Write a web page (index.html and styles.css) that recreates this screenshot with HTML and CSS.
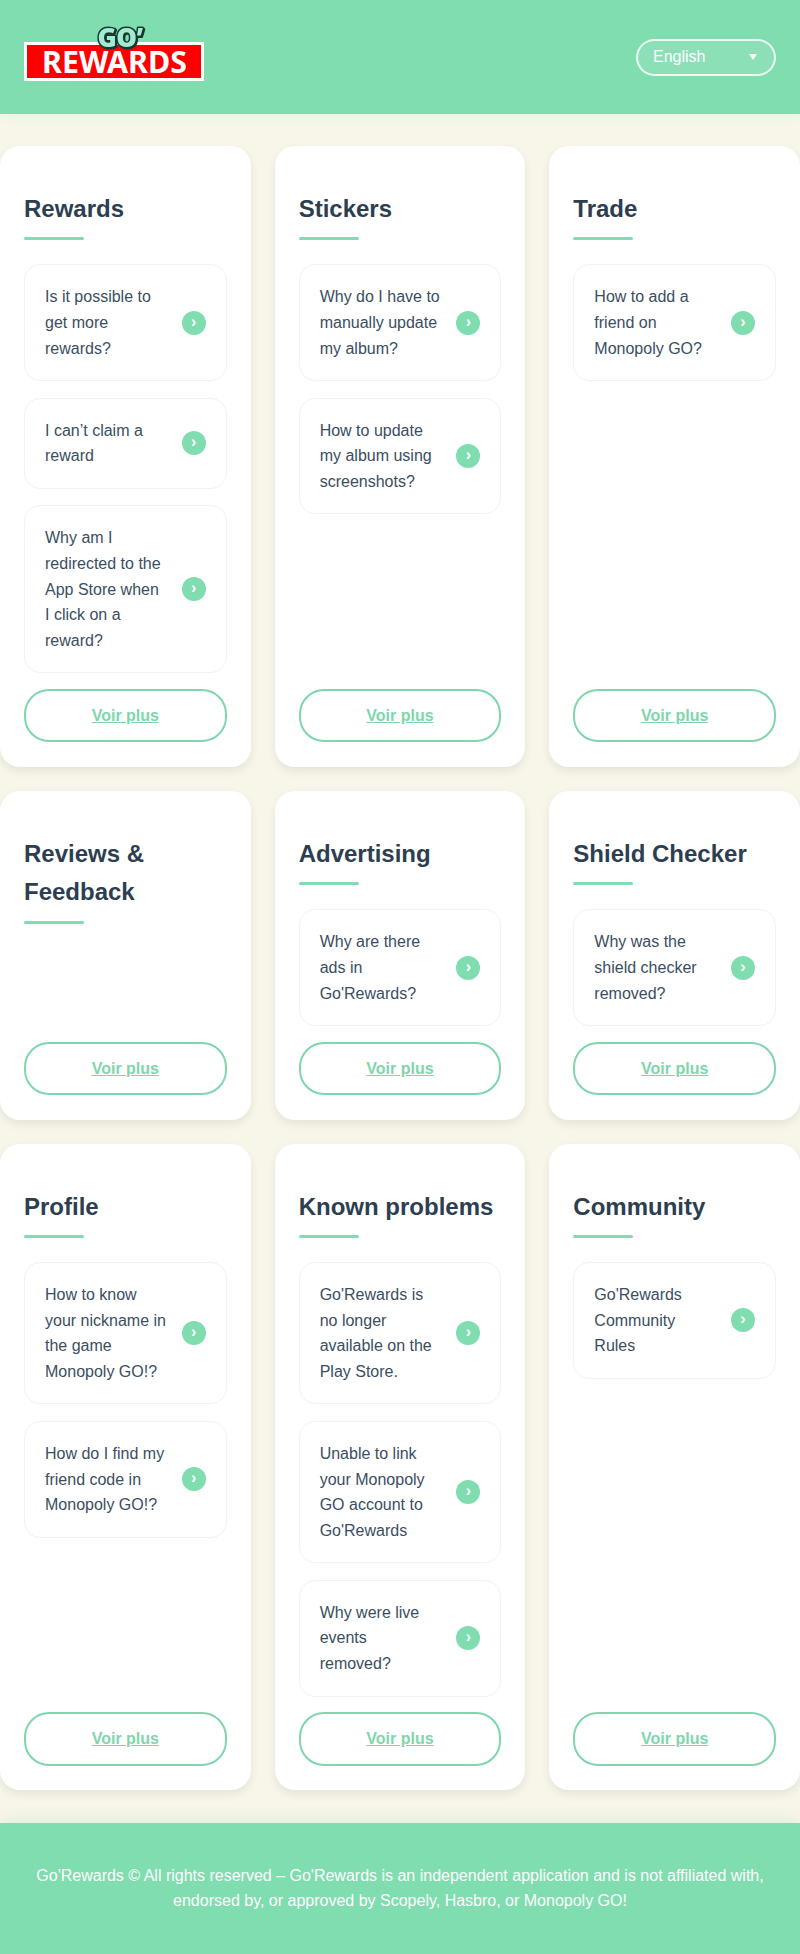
FILE: index.html
```html
<!DOCTYPE html>
<html lang="en">
<head>
<meta charset="utf-8">
<title>Go'Rewards FAQ</title>
<link rel="stylesheet" href="styles.css">
</head>
<body>
<header class="site-header">
  <a class="logo" href="#">
    <svg class="logo-svg" viewBox="0 0 180 62" width="180" height="62" aria-label="Go'Rewards">
      <rect class="logo-box" x="1.5" y="17.5" width="177" height="36"/>
      <text class="logo-rewards" x="90.5" y="47" text-anchor="middle" textLength="145" lengthAdjust="spacingAndGlyphs">REWARDS</text>
      <text class="logo-go" x="73.5" y="20.5">GO’</text>
    </svg>
  </a>
  <div class="lang">
    <span>English</span>
    <span class="lang-arrow"></span>
  </div>
</header>
<main class="grid">
  <section class="card">
    <h2>Rewards</h2>
    <div class="list">
      <a class="item" href="#"><span>Is it possible to get more rewards?</span><i class="chev">›</i></a>
      <a class="item" href="#"><span>I can’t claim a reward</span><i class="chev">›</i></a>
      <a class="item" href="#"><span>Why am I redirected to the App Store when I click on a reward?</span><i class="chev">›</i></a>
    </div>
    <a class="more" href="#">Voir plus</a>
  </section>
  <section class="card">
    <h2>Stickers</h2>
    <div class="list">
      <a class="item" href="#"><span>Why do I have to manually update my album?</span><i class="chev">›</i></a>
      <a class="item" href="#"><span>How to update my album using screenshots?</span><i class="chev">›</i></a>
    </div>
    <a class="more" href="#">Voir plus</a>
  </section>
  <section class="card">
    <h2>Trade</h2>
    <div class="list">
      <a class="item" href="#"><span>How to add a friend on Monopoly GO?</span><i class="chev">›</i></a>
    </div>
    <a class="more" href="#">Voir plus</a>
  </section>
  <section class="card">
    <h2>Reviews &amp; Feedback</h2>
    <div class="list"></div>
    <a class="more" href="#">Voir plus</a>
  </section>
  <section class="card">
    <h2>Advertising</h2>
    <div class="list">
      <a class="item" href="#"><span>Why are there ads in Go'Rewards?</span><i class="chev">›</i></a>
    </div>
    <a class="more" href="#">Voir plus</a>
  </section>
  <section class="card">
    <h2>Shield Checker</h2>
    <div class="list">
      <a class="item" href="#"><span>Why was the shield checker removed?</span><i class="chev">›</i></a>
    </div>
    <a class="more" href="#">Voir plus</a>
  </section>
  <section class="card">
    <h2>Profile</h2>
    <div class="list">
      <a class="item" href="#"><span>How to know your nickname in the game Monopoly GO!?</span><i class="chev">›</i></a>
      <a class="item" href="#"><span>How do I find my friend code in Monopoly GO!?</span><i class="chev">›</i></a>
    </div>
    <a class="more" href="#">Voir plus</a>
  </section>
  <section class="card">
    <h2>Known problems</h2>
    <div class="list">
      <a class="item" href="#"><span>Go'Rewards is no longer available on the Play Store.</span><i class="chev">›</i></a>
      <a class="item" href="#"><span>Unable to link your Monopoly GO account to Go'Rewards</span><i class="chev">›</i></a>
      <a class="item" href="#"><span>Why were live events removed?</span><i class="chev">›</i></a>
    </div>
    <a class="more" href="#">Voir plus</a>
  </section>
  <section class="card">
    <h2>Community</h2>
    <div class="list">
      <a class="item" href="#"><span>Go'Rewards Community Rules</span><i class="chev">›</i></a>
    </div>
    <a class="more" href="#">Voir plus</a>
  </section>
</main>
<footer class="site-footer">
  <p>Go'Rewards © All rights reserved – Go'Rewards is an independent application and is not affiliated with, endorsed by, or approved by Scopely, Hasbro, or Monopoly GO!</p>
</footer>
</body>
</html>
```
FILE: styles.css
```css
* { box-sizing: border-box; }
html, body { margin: 0; padding: 0; }
body {
  font-family: "Liberation Sans", Arial, sans-serif;
  font-size: 16px;
  line-height: 1.6;
  color: #2c3e50;
  background: #f8f6e9;
}
.site-header {
  height: 114px;
  background: #7fddaf;
  display: flex;
  align-items: center;
  justify-content: space-between;
  padding: 0 24px;
  box-shadow: 0 2px 10px rgba(127,221,175,.12);
}
.logo { display: block; }
.logo-svg { display: block; overflow: visible; }
.logo-box { fill: #ff0000; stroke: #fff; stroke-width: 3; }
.logo-rewards { font: 700 30px "Noto Sans", sans-serif; fill: #fff; }
.logo-go {
  font: 800 26px "Open Sans", sans-serif;
  stroke-width: 3;
  stroke-linejoin: round;
  paint-order: stroke;
  letter-spacing: -.5px;
  fill: #a3ead0;
  stroke: #143a30;
  filter: drop-shadow(1px 1px 0 #143a30);
}
.lang {
  width: 140px;
  height: 37px;
  border: 2px solid rgba(255,255,255,.85);
  border-radius: 19px;
  background: rgba(255,255,255,.1);
  color: #fff;
  display: flex;
  align-items: center;
  justify-content: space-between;
  padding: 0 17px 0 15px;
  font-size: 16px;
}
.lang-arrow {
  width: 0;
  height: 0;
  border-left: 4px solid transparent;
  border-right: 4px solid transparent;
  border-top: 6px solid #fff;
}
.grid {
  display: grid;
  grid-template-columns: repeat(3, 1fr);
  gap: 24px;
  padding: 32px 0 32.5px;
}
.card {
  background: #fff;
  border-radius: 20px;
  padding: 24px 24px 24.5px;
  display: flex;
  flex-direction: column;
  box-shadow: 0 4px 10px rgba(0,0,0,.08);
}
.card h2 {
  margin: 20px 0 28px;
  padding-bottom: 8px;
  font-size: 24px;
  line-height: 1.6;
  font-weight: 700;
  color: #2c3e50;
  position: relative;
}
.card h2::after {
  content: "";
  position: absolute;
  left: 0;
  bottom: -4px;
  width: 60px;
  height: 3px;
  border-radius: 2px;
  background: #7fddaf;
}
.list { display: flex; flex-direction: column; gap: 16.5px; flex: 1; margin-bottom: 15.5px; }
.item {
  display: flex;
  align-items: center;
  justify-content: space-between;
  gap: 14px;
  padding: 19px 20px;
  border: 1px solid #f2f2f2;
  border-radius: 16px;
  color: #3a4e62;
  text-decoration: none;
  background: #fff;
}
.item span { flex: 1; }
.chev {
  flex: none;
  width: 24px;
  height: 24px;
  border-radius: 50%;
  background: #7fddaf;
  color: #fff;
  font-style: normal;
  font-weight: 700;
  font-size: 16px;
  line-height: 22px;
  text-align: center;
}
.more {
  display: block;
  text-align: center;
  padding: 12px;
  border: 2px solid #7fd6ac;
  border-radius: 25px;
  color: #7fd6ac;
  font-weight: 700;
  text-decoration: underline;
}
.site-footer {
  background: #7fddaf;
  color: #fff;
  padding: 40px 24px;
  text-align: center;
  box-shadow: 0 -4px 16px rgba(127,221,175,.2);
}
.site-footer p { margin: 0; line-height: 1.6; }
```
